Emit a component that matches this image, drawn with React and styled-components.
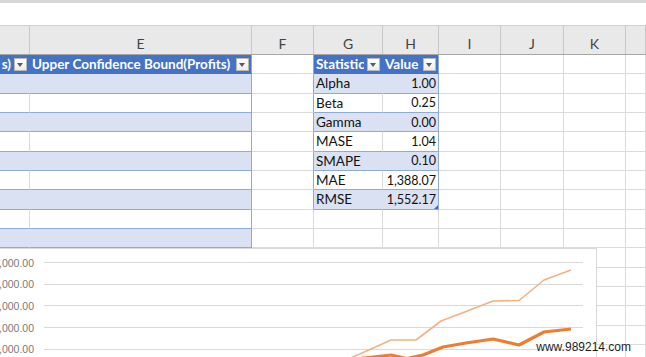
import React from 'react';
import styled, { createGlobalStyle } from 'styled-components';

const GlobalStyle = createGlobalStyle`
  html, body {
    margin: 0;
    padding: 0;
    background: #fff;
  }
  body {
    width: 646px;
    height: 357px;
    overflow: hidden;
    font-family: Lato, "Open Sans", sans-serif;
  }
`;

const COLS = '30px 222px 62px 69px 56px 62px 63px 62px 1fr';

const GRID = '#dadada';
const TABLE_LINE = '#8ea9db';
const HEAD_BLUE = '#4472c4';
const BAND = '#d9e1f2';

const Page = styled.div`
  position: relative;
  width: 646px;
  height: 357px;
  overflow: hidden;
`;

const FormulaEdge = styled.div`
  height: 22px;
  border-top: 3px solid #d8d8d8;
  background: #fff;
`;

const ColHeaderRow = styled.div`
  display: grid;
  grid-template-columns: ${COLS};
  height: 28px;
  border-top: 1px solid #d0d0d0;
  border-bottom: 1px solid #a6a6a6;
  background: #e9e9e9;
`;

const ColHeader = styled.div`
  display: flex;
  align-items: flex-start;
  justify-content: center;
  box-sizing: border-box;
  padding-top: 9px;
  border-right: 1px solid #c8c8c8;
  color: #444;
  font-size: 14px;
`;

const Grid = styled.div`
  display: grid;
  grid-template-columns: ${COLS};
  grid-auto-rows: 19.33px;
`;

const bgFor = { plain: '#fff', head: HEAD_BLUE, band: BAND, white: '#fff' };
const innerRight = { plain: GRID, head: HEAD_BLUE, band: BAND, white: GRID };
const bottomFor = { plain: GRID, head: HEAD_BLUE, band: TABLE_LINE, white: TABLE_LINE };

const Cell = styled.div`
  position: relative;
  box-sizing: border-box;
  display: flex;
  align-items: center;
  justify-content: ${(p) => (p.$align === 'right' ? 'flex-end' : 'flex-start')};
  padding: 0 2px;
  min-width: 0;
  overflow: hidden;
  white-space: nowrap;
  font-size: ${(p) => (p.$num ? '12.5px' : '13.5px')};
  color: ${(p) => (p.$kind === 'head' ? '#fff' : '#111')};
  font-weight: ${(p) => (p.$kind === 'head' ? 700 : 400)};
  background: ${(p) => bgFor[p.$kind]};
  border-bottom: 1px solid ${(p) => bottomFor[p.$kind]};
  border-right: 1px solid ${(p) => p.$rb || innerRight[p.$kind]};

  ${(p) =>
    p.$handle &&
    `
    &::after {
      content: '';
      position: absolute;
      right: 0;
      bottom: 0;
      border-left: 4px solid transparent;
      border-bottom: 4px solid #3f6bbf;
    }
  `}
`;

const HeadLabel = styled.div`
  flex: 1;
  min-width: 0;
  display: flex;
  justify-content: ${(p) => (p.$clipStart ? 'flex-end' : 'flex-start')};
  overflow: hidden;
  font-size: 13.5px;
`;

const FilterButton = styled.span`
  position: relative;
  flex-shrink: 0;
  box-sizing: border-box;
  width: 13px;
  height: 13px;
  margin-left: 3px;
  border: 1px solid #b8b8b8;
  background: linear-gradient(#ffffff, #ececec);

  &::after {
    content: '';
    position: absolute;
    left: 2px;
    top: 4px;
    border-left: 3.5px solid transparent;
    border-right: 3.5px solid transparent;
    border-top: 4px solid #5a5a5a;
  }
`;

const ChartFrame = styled.div`
  position: absolute;
  left: -1px;
  top: 248px;
  width: 598px;
  height: 130px;
  box-sizing: border-box;
  background: #fff;
  border: 1px solid #d9d9d9;
`;

const Axis = styled.div`
  display: flex;
  flex-direction: column;
  padding: 3px 13px 0 0;
`;

const AxisRow = styled.div`
  display: flex;
  align-items: center;
  height: 21.6px;
`;

const AxisLabel = styled.div`
  width: 34px;
  margin-right: 10px;
  display: flex;
  justify-content: flex-end;
  white-space: nowrap;
  font-family: "Liberation Sans", Arial, sans-serif;
  font-size: 10.5px;
  color: #7a7a7a;
`;

const GridLine = styled.div`
  flex: 1;
  height: 1px;
  background: #d9d9d9;
`;

const Series = styled.svg`
  position: absolute;
  left: 0;
  top: 0;
`;

const Watermark = styled.div`
  position: absolute;
  right: 15px;
  top: 340px;
  font-family: "Liberation Sans", Arial, sans-serif;
  font-size: 12px;
  color: #1b1b1b;
  white-space: nowrap;
  text-shadow: 0 0 2px #fff, 0 0 2px #fff;
`;

const stats = [
  ['Alpha', '1.00'],
  ['Beta', '0.25'],
  ['Gamma', '0.00'],
  ['MASE', '1.04'],
  ['SMAPE', '0.10'],
  ['MAE', '1,388.07'],
  ['RMSE', '1,552.17'],
];

const axisLabels = ['50,000.00', '40,000.00', '30,000.00', '20,000.00', '10,000.00'];

const upper = [
  [330, 119], [352, 108.5], [391, 91], [416, 91], [441, 72], [466, 62.5],
  [493, 52], [519, 51.5], [544, 31], [571, 21],
];
const fitted = [
  [330, 113], [373, 108], [391, 106], [407, 109.5], [423, 106], [443, 98],
  [466, 94], [493, 90], [519, 96], [544, 83], [571, 80],
];

const toPoints = (pts) => pts.map(([x, y]) => `${x},${y}`).join(' ');

function Header({ text, clipStart }) {
  return (
    <>
      <HeadLabel $clipStart={clipStart}>
        <span>{text}</span>
      </HeadLabel>
      <FilterButton />
    </>
  );
}

function buildRow(r) {
  const cells = [];
  const leftKind = r === 0 ? 'head' : r <= 9 ? (r % 2 ? 'band' : 'white') : 'plain';
  const inStats = r <= 7;
  const statKind = r === 0 ? 'head' : inStats ? (r % 2 ? 'band' : 'white') : 'plain';

  cells.push(
    <Cell key="d" $kind={leftKind}>
      {r === 0 && <Header text="Lower Confidence Bound(Profits)" clipStart />}
    </Cell>
  );
  cells.push(
    <Cell key="e" $kind={leftKind} $rb={r <= 9 ? TABLE_LINE : undefined}>
      {r === 0 && <Header text="Upper Confidence Bound(Profits)" />}
    </Cell>
  );
  cells.push(<Cell key="f" $kind="plain" $rb={inStats ? TABLE_LINE : undefined} />);
  cells.push(
    <Cell key="g" $kind={statKind}>
      {r === 0 ? <Header text="Statistic" /> : inStats && stats[r - 1][0]}
    </Cell>
  );
  cells.push(
    <Cell
      key="h"
      $kind={statKind}
      $align="right"
      $num
      $rb={inStats ? TABLE_LINE : undefined}
      $handle={r === 7}
    >
      {r === 0 ? <Header text="Value" /> : inStats && stats[r - 1][1]}
    </Cell>
  );
  ['i', 'j', 'k', 'l'].forEach((k) => cells.push(<Cell key={k} $kind="plain" />));
  return cells;
}

export default function App() {
  const rows = Array.from({ length: 16 }, (_, r) => buildRow(r));

  return (
    <Page>
      <GlobalStyle />
      <FormulaEdge />
      <ColHeaderRow>
        {['', 'E', 'F', 'G', 'H', 'I', 'J', 'K', ''].map((c, i) => (
          <ColHeader key={i}>{c}</ColHeader>
        ))}
      </ColHeaderRow>
      <Grid>{rows}</Grid>

      <ChartFrame>
        <Axis>
          {axisLabels.map((l) => (
            <AxisRow key={l}>
              <AxisLabel>
                <span>{l}</span>
              </AxisLabel>
              <GridLine />
            </AxisRow>
          ))}
        </Axis>
        <Series width="596" height="128" viewBox="0 0 596 128">
          <polyline
            points={toPoints(upper)}
            fill="none"
            stroke="#f4b183"
            strokeWidth="1.6"
            strokeLinejoin="round"
          />
          <polyline
            points={toPoints(fitted)}
            fill="none"
            stroke="#ed7d31"
            strokeWidth="3.2"
            strokeLinejoin="round"
          />
        </Series>
      </ChartFrame>

      <Watermark>www.989214.com</Watermark>
    </Page>
  );
}
